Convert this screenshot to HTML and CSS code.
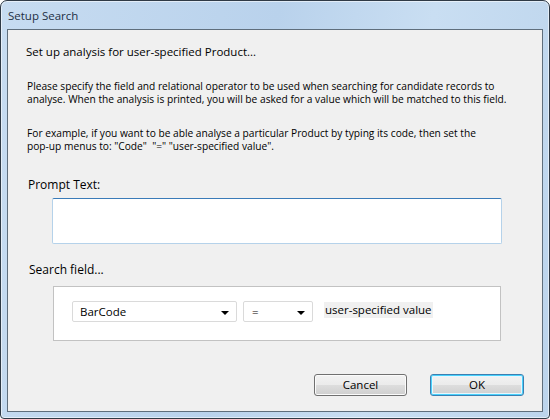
FILE: index.html
```html
<!DOCTYPE html>
<html>
<head>
<meta charset="utf-8">
<title>Setup Search</title>
<link rel="stylesheet" href="styles.css">
</head>
<body>
<div class="window">
  <div class="titlebar">Setup Search</div>
  <div class="client">
    <div class="heading">Set up analysis for user-specified Product...</div>
    <p class="para p1">Please specify the field and relational operator to be used when searching for candidate records to analyse. When the analysis is printed, you will be asked for a value which will be matched to this field.</p>
    <p class="para p2">For example, if you want to be able analyse a particular Product by typing its code, then set the pop-up menus to: "Code"&nbsp; "=" "user-specified value".</p>
    <div class="label prompt">Prompt Text:</div>
    <div class="textbox"></div>
    <div class="label search">Search field...</div>
    <div class="group">
      <div class="select field"><span>BarCode</span><i class="arrow"></i></div>
      <div class="select op"><span>=</span><i class="arrow"></i></div>
      <div class="valuelabel">user-specified value</div>
    </div>
    <div class="buttons">
      <div class="btn cancel">Cancel</div>
      <div class="btn ok">OK</div>
    </div>
  </div>
</div>
</body>
</html>
```
FILE: styles.css
```css
html, body {
  margin: 0;
  padding: 0;
  background: #ffffff;
}
body {
  width: 550px;
  height: 419px;
  overflow: hidden;
  font-family: "Open Sans", "Noto Sans", sans-serif;
  color: #000;
}
.window {
  box-sizing: border-box;
  width: 550px;
  height: 419px;
  border: 1px solid #2f3a46;
  border-radius: 7px 7px 4px 4px;
  background: linear-gradient(100deg, #c7dcf1 0%, #b9d2ec 45%, #c9def2 70%, #bcd4ec 100%);
  padding: 0 6px 6px 6px;
  display: flex;
  flex-direction: column;
  box-shadow: inset 0 0 0 1px rgba(255,255,255,0.55);
}
.titlebar {
  height: 28px;
  line-height: 29px;
  font-size: 11.5px;
  padding-left: 1px;
  color: #1e2f44;
}
.client {
  flex: 1;
  border: 1px solid #5f6e7c;
  background: #f0f0f0;
  padding: 0 18px 0 18px;
  display: flex;
  flex-direction: column;
}
.heading {
  margin-top: 14px;
  font-size: 11.5px;
  line-height: 16px;
  height: 16px;
  white-space: nowrap;
}
.para {
  margin: 0;
  font-size: 10.2px;
  line-height: 13px;
  padding-left: 1px;
}
.p1 { margin-top: 20px; width: 496px; }
.p2 { margin-top: 21px; width: 470px; }
.label {
  font-size: 12px;
  line-height: 16px;
  height: 16px;
}
.prompt { margin-top: 24px; padding-left: 2px; }
.textbox {
  margin-top: 5px;
  margin-left: 26px;
  width: 448px;
  height: 44px;
  background: #fff;
  border: 1px solid #b5d2ea;
  border-top-color: #3a7bb8;
  border-radius: 2px;
}
.search { margin-top: 18px; padding-left: 3px; }
.group {
  margin-top: 8px;
  margin-left: 27px;
  width: 428px;
  background: #fff;
  border: 1px solid #c2c2c2;
  display: flex;
  align-items: flex-start;
  padding-top: 14px;
  padding-left: 18px;
  box-sizing: content-box;
  height: 39px;
}
.select {
  box-sizing: border-box;
  height: 21px;
  border: 1px solid #dadada;
  border-radius: 2px;
  background: #fff;
  position: relative;
  font-size: 11.5px;
  line-height: 19px;
  padding-left: 7px;
}
.select.field { width: 165px; }
.select.op { width: 70px; margin-left: 6px; padding-left: 8px; }
.arrow {
  position: absolute;
  right: 7px;
  top: 9px;
  width: 0;
  height: 0;
  border-left: 4px solid transparent;
  border-right: 4px solid transparent;
  border-top: 4px solid #000;
}
.valuelabel {
  margin-left: 11px;
  margin-top: 1px;
  height: 16px;
  line-height: 16px;
  background: #f0f0f0;
  font-size: 11.5px;
  padding: 0 1px;
}
.buttons {
  margin-top: 33px;
  display: flex;
  justify-content: flex-end;
  gap: 23px;
}
.btn {
  box-sizing: border-box;
  height: 22px;
  width: 93px;
  border: 1px solid #707070;
  border-radius: 3px;
  background: linear-gradient(#f2f2f2 0%, #ebebeb 50%, #dddddd 51%, #cfcfcf 100%);
  box-shadow: inset 0 0 0 1px #fbfbfb;
  text-align: center;
  font-size: 11.5px;
  line-height: 20px;
}
.btn.ok {
  width: 94px;
  border-color: #3c7fb1;
  box-shadow: inset 0 0 0 1px #48d1fc, inset 0 0 0 2px #e8f6fd;
}
```
